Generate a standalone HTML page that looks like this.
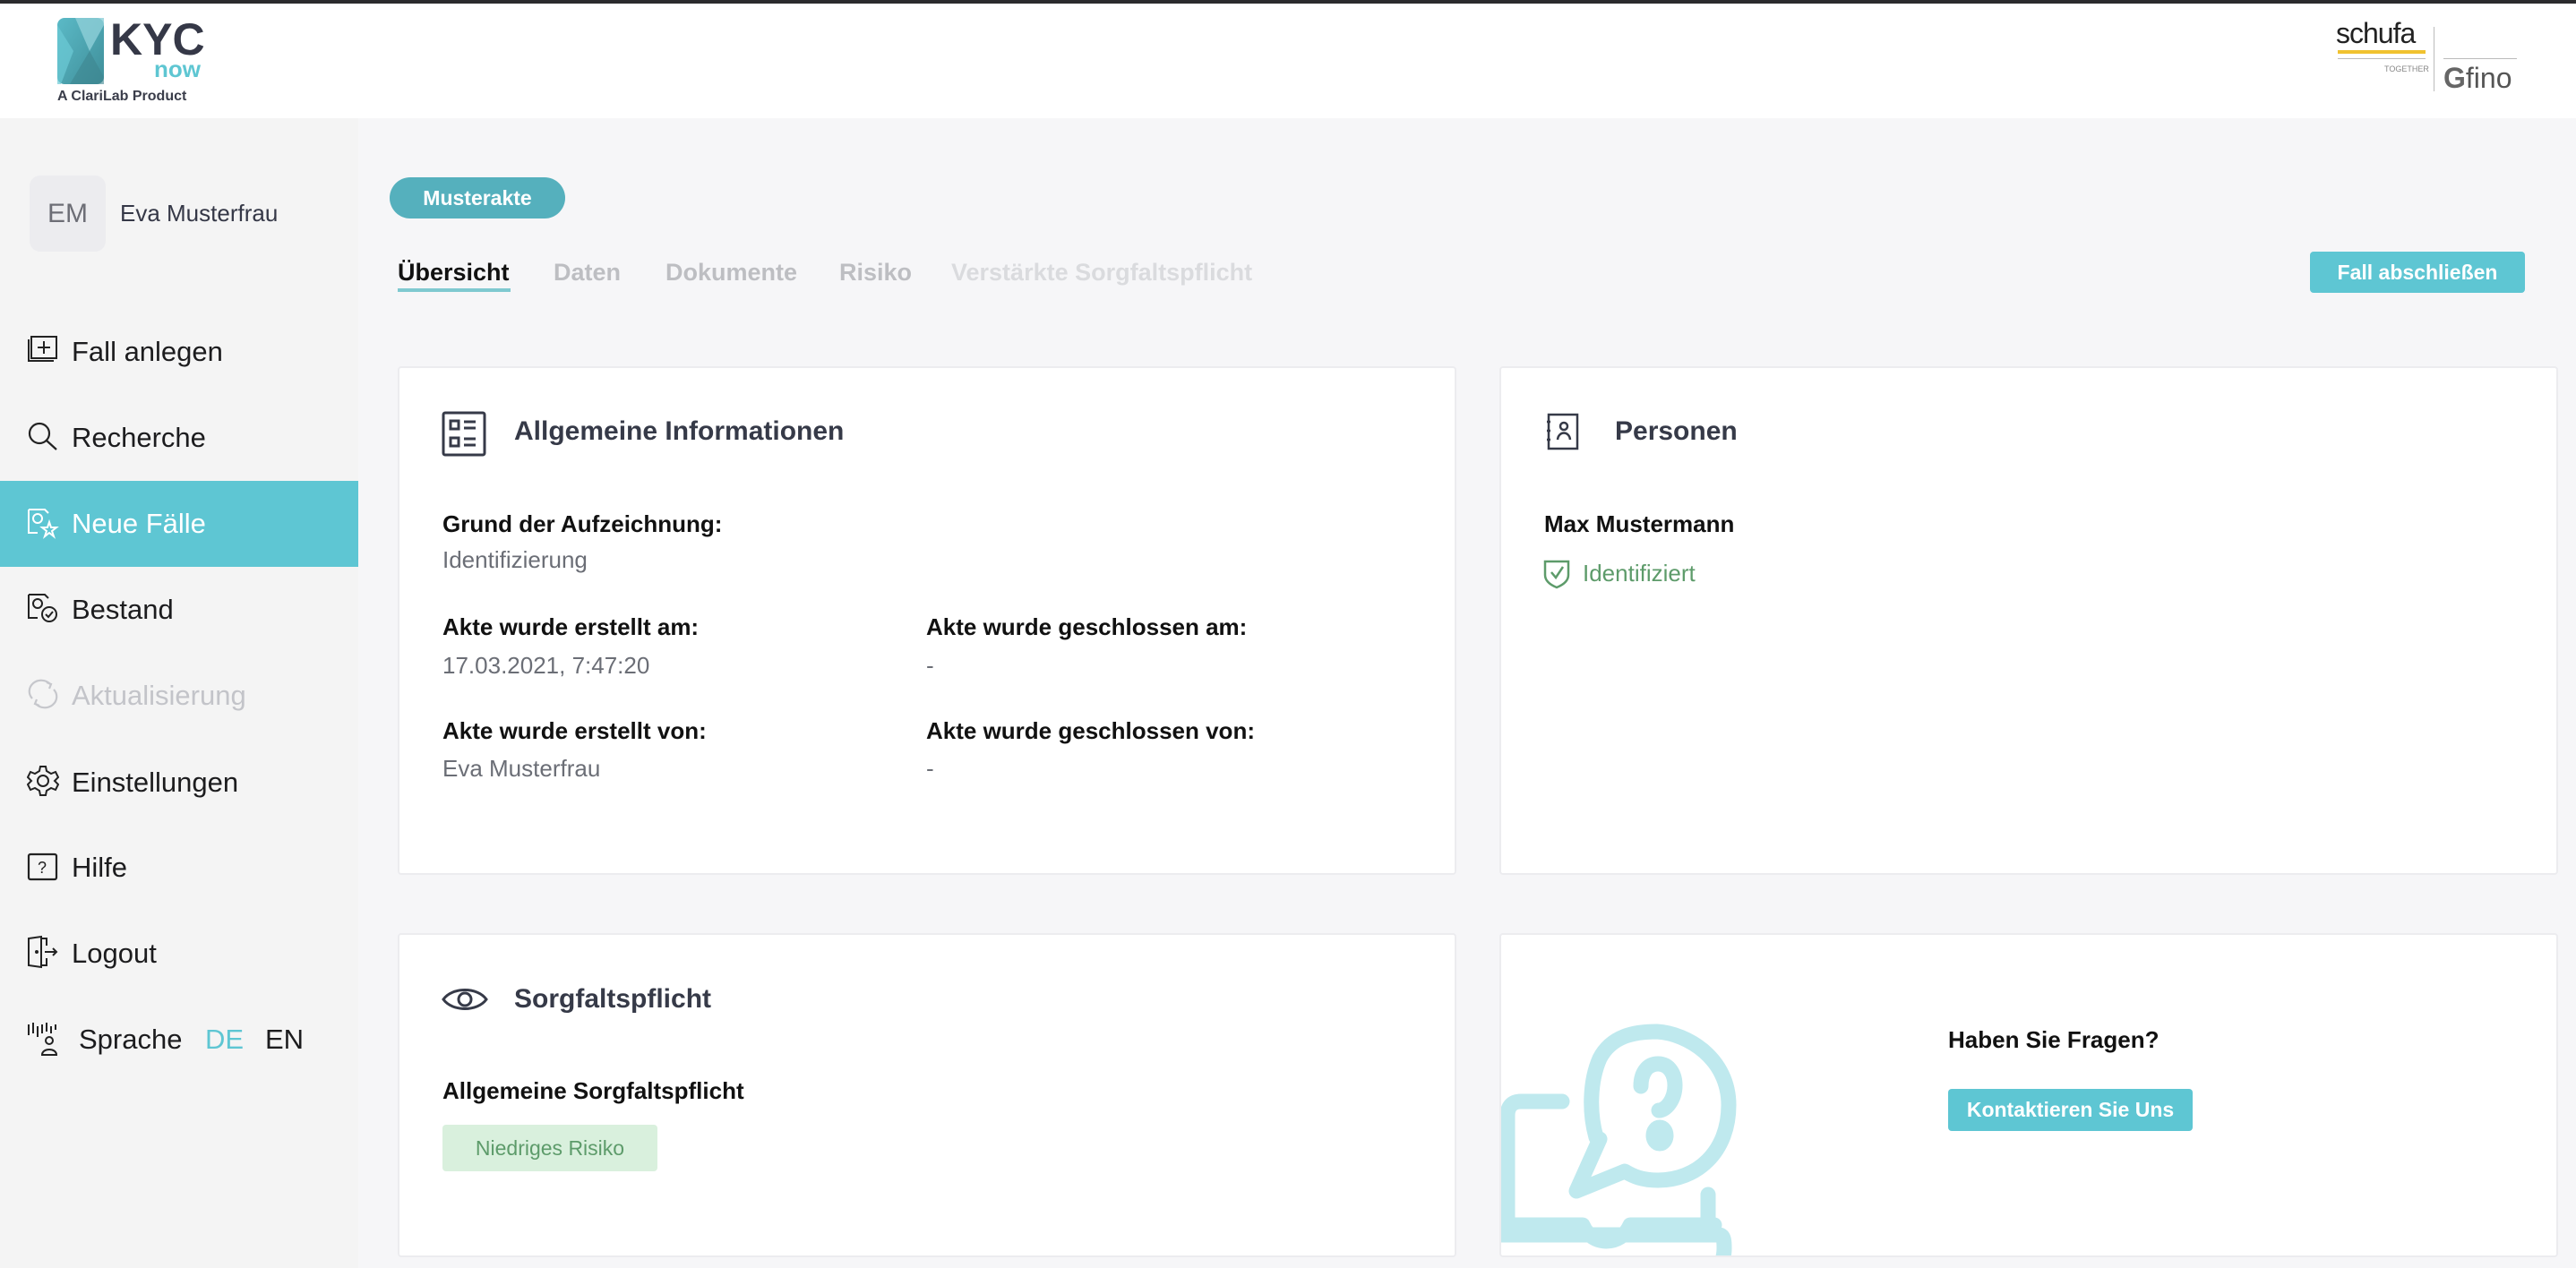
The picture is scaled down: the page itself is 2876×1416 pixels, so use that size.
<!DOCTYPE html>
<html><head><meta charset="utf-8"><style>
*{margin:0;padding:0;box-sizing:border-box}
body{width:2876px;height:1416px;position:relative;overflow:hidden;background:#f6f6f8;font-family:"Liberation Sans",sans-serif}
.a{position:absolute;white-space:nowrap}
.t{line-height:40px;height:40px}
.card{position:absolute;background:#fff;border:2px solid #ececef;border-radius:4px}
.nav{position:absolute;left:80px;font-size:31px;color:#1c1c1e;line-height:40px}
.lbl{font-size:26px;font-weight:bold;color:#111}
.val{font-size:26px;color:#6b6e76}
.h{font-size:30px;font-weight:bold;color:#363a48}
</style></head><body>
<div class="a" style="left:0;top:0;width:2876px;height:4px;background:#2b2b2e"></div>
<div class="a" style="left:0;top:4px;width:2876px;height:128px;background:#fff"></div>
<!-- KYC logo -->
<svg class="a" style="left:64px;top:20px" width="52" height="74" viewBox="0 0 52 74">
<defs><linearGradient id="g1" x1="0" y1="0" x2="1" y2="1"><stop offset="0" stop-color="#5bbac7"/><stop offset="1" stop-color="#3f8e99"/></linearGradient></defs>
<rect x="0" y="0" width="52" height="74" rx="8" fill="url(#g1)"/>
<path d="M20 0 L52 0 L52 8 L36 37 Z" fill="#8fd0d8" opacity=".8"/>
<path d="M0 8 L18 37 L4 74 L0 74 Z" fill="#6ccbd5" opacity=".7"/>
<path d="M36 37 L52 66 L52 74 L14 74 Z" fill="#3d8590" opacity=".6"/>
</svg>
<div class="a" style="left:123px;top:16px;font-size:50px;font-weight:bold;color:#353847;line-height:56px">KYC</div>
<div class="a" style="left:172px;top:64px;font-size:26px;font-weight:bold;color:#5ec6d2;line-height:26px">now</div>
<div class="a" style="left:64px;top:98px;font-size:16px;font-weight:bold;color:#3a3d4a;line-height:20px">A ClariLab Product</div>
<!-- schufa/fino -->
<div class="a" style="left:2608px;top:20px;font-size:32px;color:#222;line-height:34px;letter-spacing:-1px">schufa</div>
<div class="a" style="left:2610px;top:56px;width:98px;height:4px;background:#f0c230"></div>
<div class="a" style="left:2610px;top:65px;width:98px;height:1px;background:#bbb"></div>
<div class="a" style="left:2662px;top:72px;font-size:9px;color:#888">TOGETHER</div>
<div class="a" style="left:2717px;top:30px;width:1px;height:72px;background:#bbb"></div>
<div class="a" style="left:2728px;top:65px;width:82px;height:1px;background:#bbb"></div>
<div class="a" style="left:2728px;top:70px;font-size:32px;color:#555;line-height:34px"><span style="color:#666;font-weight:bold">G</span>fino</div>
<!-- sidebar -->
<div class="a" style="left:0;top:132px;width:400px;height:1284px;background:#f4f4f4"></div>
<div class="a" style="left:33px;top:196px;width:85px;height:85px;background:#ececef;border-radius:12px;font-size:30px;color:#6d6e76;text-align:center;line-height:85px">EM</div>
<div class="a" style="left:134px;top:222px;font-size:26px;color:#353847;line-height:32px">Eva Musterfrau</div>
<div class="a" style="left:0;top:537px;width:400px;height:96px;background:#5ec6d3"></div>
<svg class="a" style="left:30px;top:372px" width="36" height="40" viewBox="0 0 36 40" fill="none" stroke="#222" stroke-width="2"><rect x="5" y="4" width="28" height="24"/><path d="M2 7 V31 H30"/><path d="M19 9 V23 M12 16 H26"/></svg>
<div class="nav" style="top:373px">Fall anlegen</div>
<svg class="a" style="left:30px;top:470px" width="36" height="36" viewBox="0 0 36 36" fill="none" stroke="#222" stroke-width="2.2"><circle cx="14" cy="14" r="11"/><path d="M22 22 L33 32"/></svg>
<div class="nav" style="top:469px">Recherche</div>
<svg class="a" style="left:30px;top:565px" width="36" height="38" viewBox="0 0 36 38" fill="none" stroke="#fff" stroke-width="2"><path d="M2 4 H20 L24 8 M2 4 V30 H12"/><circle cx="12" cy="14" r="5"/><path d="M25 18 L27 24 L33 24 L28 28 L30 34 L25 30 L20 34 L22 28 L17 24 L23 24 Z"/></svg>
<div class="nav" style="top:565px;color:#fff">Neue Fälle</div>
<svg class="a" style="left:30px;top:660px" width="36" height="38" viewBox="0 0 36 38" fill="none" stroke="#222" stroke-width="2"><path d="M2 4 H20 L24 8 M2 4 V30 H12"/><circle cx="12" cy="14" r="5"/><circle cx="25" cy="26" r="8"/><path d="M21 26 L24 29 L29 23"/></svg>
<div class="nav" style="top:661px">Bestand</div>
<svg class="a" style="left:30px;top:758px" width="36" height="34" viewBox="0 0 36 34" fill="none" stroke="#c6c7cc" stroke-width="2.2"><path d="M6 22 A13 12 0 0 1 26 6 M30 12 A13 12 0 0 1 10 28"/><path d="M22 4 L27 6 L25 11 M14 30 L9 28 L11 23"/></svg>
<div class="nav" style="top:757px;color:#c3c4c9">Aktualisierung</div>
<svg class="a" style="left:30px;top:854px" width="36" height="36" viewBox="0 0 36 36" fill="none" stroke="#222" stroke-width="2"><path d="M15 2 H21 L22 7 L27 10 L32 8 L35 14 L31 18 L35 22 L32 28 L27 26 L22 29 L21 34 H15 L14 29 L9 26 L4 28 L1 22 L5 18 L1 14 L4 8 L9 10 L14 7 Z"/><circle cx="18" cy="18" r="6"/></svg>
<div class="nav" style="top:854px">Einstellungen</div>
<svg class="a" style="left:30px;top:950px" width="36" height="36" viewBox="0 0 36 36" fill="none" stroke="#222" stroke-width="2.2"><rect x="2" y="4" width="31" height="28" rx="2"/><text x="17" y="25" font-size="18" fill="#222" stroke="none" text-anchor="middle" font-family="Liberation Sans">?</text></svg>
<div class="nav" style="top:949px">Hilfe</div>
<svg class="a" style="left:30px;top:1044px" width="36" height="38" viewBox="0 0 36 38" fill="none" stroke="#222" stroke-width="2"><path d="M2 4 L16 2 V36 L2 34 Z M16 4 H22 V12 M22 26 V34 H16 M20 19 H33 M29 15 L33 19 L29 23"/><circle cx="11" cy="19" r="1" fill="#222"/></svg>
<div class="nav" style="top:1045px">Logout</div>
<svg class="a" style="left:30px;top:1140px" width="36" height="40" viewBox="0 0 36 40" fill="none" stroke="#222" stroke-width="2"><path d="M2 4 V16 M7 2 V14 M12 6 V18 M17 4 V14 M22 2 V12 M27 6 V14 M32 4 V10"/><circle cx="25" cy="22" r="4"/><path d="M17 38 C17 30 33 30 33 38 Z"/></svg>
<div class="nav" style="left:88px;top:1141px">Sprache</div>
<div class="nav" style="left:229px;top:1141px;color:#5ec6d3">DE</div>
<div class="nav" style="left:296px;top:1141px">EN</div>
<!-- main top -->
<div class="a" style="left:435px;top:198px;width:196px;height:46px;background:#55b0bd;border-radius:23px;color:#fff;font-size:23px;font-weight:bold;text-align:center;line-height:46px">Musterakte</div>
<div class="a t" style="left:444px;top:284px;font-size:27px;font-weight:bold;color:#111">Übersicht</div>
<div class="a" style="left:444px;top:322px;width:126px;height:4px;background:#7fc9d0"></div>
<div class="a t" style="left:618px;top:284px;font-size:27px;font-weight:bold;color:#bdbec2">Daten</div>
<div class="a t" style="left:743px;top:284px;font-size:27px;font-weight:bold;color:#bdbec2">Dokumente</div>
<div class="a t" style="left:937px;top:284px;font-size:27px;font-weight:bold;color:#bdbec2">Risiko</div>
<div class="a t" style="left:1062px;top:284px;font-size:27px;font-weight:bold;color:#dadbde">Verstärkte Sorgfaltspflicht</div>
<div class="a" style="left:2579px;top:281px;width:240px;height:46px;background:#5ec6d3;border-radius:4px;color:#fff;font-size:23px;font-weight:bold;text-align:center;line-height:46px">Fall abschließen</div>
<!-- card 1 -->
<div class="card" style="left:444px;top:409px;width:1182px;height:568px"></div>
<svg class="a" style="left:493px;top:459px" width="50" height="51" viewBox="0 0 50 51" fill="none" stroke="#363a48" stroke-width="3"><rect x="2" y="2" width="46" height="47" rx="2"/><rect x="10" y="11" width="9" height="9"/><rect x="10" y="30" width="9" height="9"/><path d="M25 12 H38 M25 19 H38 M25 31 H38 M25 38 H38"/></svg>
<div class="a t h" style="left:574px;top:462px">Allgemeine Informationen</div>
<div class="a t lbl" style="left:494px;top:565px">Grund der Aufzeichnung:</div>
<div class="a t val" style="left:494px;top:605px">Identifizierung</div>
<div class="a t lbl" style="left:494px;top:680px">Akte wurde erstellt am:</div>
<div class="a t val" style="left:494px;top:723px">17.03.2021, 7:47:20</div>
<div class="a t lbl" style="left:1034px;top:680px">Akte wurde geschlossen am:</div>
<div class="a t val" style="left:1034px;top:723px">-</div>
<div class="a t lbl" style="left:494px;top:796px">Akte wurde erstellt von:</div>
<div class="a t val" style="left:494px;top:838px">Eva Musterfrau</div>
<div class="a t lbl" style="left:1034px;top:796px">Akte wurde geschlossen von:</div>
<div class="a t val" style="left:1034px;top:838px">-</div>
<!-- card 2 -->
<div class="card" style="left:1674px;top:409px;width:1182px;height:568px"></div>
<svg class="a" style="left:1726px;top:461px" width="40" height="42" viewBox="0 0 40 42" fill="none" stroke="#363a48" stroke-width="2.5"><rect x="3" y="2" width="32" height="38"/><path d="M1 10 H5 M1 20 H5 M1 30 H5"/><circle cx="20" cy="15" r="4"/><path d="M13 30 C14 20 26 20 27 30"/></svg>
<div class="a t h" style="left:1803px;top:462px">Personen</div>
<div class="a t lbl" style="left:1724px;top:565px">Max Mustermann</div>
<svg class="a" style="left:1723px;top:624px" width="30" height="34" viewBox="0 0 30 34" fill="none" stroke="#5d9b6a" stroke-width="2.5"><path d="M2 3 H28 V18 C28 26 20 30 15 32 C10 30 2 26 2 18 Z"/><path d="M9 15 L14 21 L22 9"/></svg>
<div class="a t" style="left:1767px;top:620px;font-size:26px;color:#5d9b6a">Identifiziert</div>
<!-- card 3 -->
<div class="card" style="left:444px;top:1042px;width:1182px;height:362px"></div>
<svg class="a" style="left:493px;top:1100px" width="52" height="32" viewBox="0 0 52 32" fill="none" stroke="#363a48" stroke-width="3"><path d="M2 16 C12 2 40 2 50 16 C40 30 12 30 2 16 Z"/><circle cx="26" cy="16" r="7"/></svg>
<div class="a t h" style="left:574px;top:1096px">Sorgfaltspflicht</div>
<div class="a t lbl" style="left:494px;top:1198px">Allgemeine Sorgfaltspflicht</div>
<div class="a" style="left:494px;top:1256px;width:240px;height:52px;background:#d9f0dd;border-radius:4px;color:#5d9b6a;font-size:23px;text-align:center;line-height:52px">Niedriges Risiko</div>
<!-- card 4 -->
<div class="card" style="left:1674px;top:1042px;width:1182px;height:362px;overflow:hidden">
<svg style="position:absolute;left:-2px;top:-2px" width="300" height="370" viewBox="0 0 300 370" fill="none" stroke="#bfe9ee" stroke-width="17" stroke-linecap="round" stroke-linejoin="round">
<path d="M70 188 H24 C14 188 9 194 9 204 V326 H93 C103 350 136 350 146 326 H240"/>
<path d="M233 326 V292"/>
<path d="M0 337 H245 C251 337 251 345 251 352 C251 360 249 366 247 370"/>
<path d="M108 228 C100 200 101 165 112 140 C125 115 150 110 176 110 C210 112 256 140 256 192 C256 245 220 276 177 276 C160 276 150 272 140 266 L86 288 L112 230"/>
<path d="M158 171 C158 155 166 146 177 146 C190 146 196 158 196 170 C196 186 186 198 178 198"/>
<ellipse cx="179" cy="226" rx="7" ry="9" fill="#bfe9ee"/>
</svg>
</div>
<div class="a t" style="left:2175px;top:1141px;font-size:26px;font-weight:bold;color:#111">Haben Sie Fragen?</div>
<div class="a" style="left:2175px;top:1216px;width:273px;height:47px;background:#5ec6d3;border-radius:4px;color:#fff;font-size:23px;font-weight:bold;text-align:center;line-height:47px">Kontaktieren Sie Uns</div>
</body></html>
